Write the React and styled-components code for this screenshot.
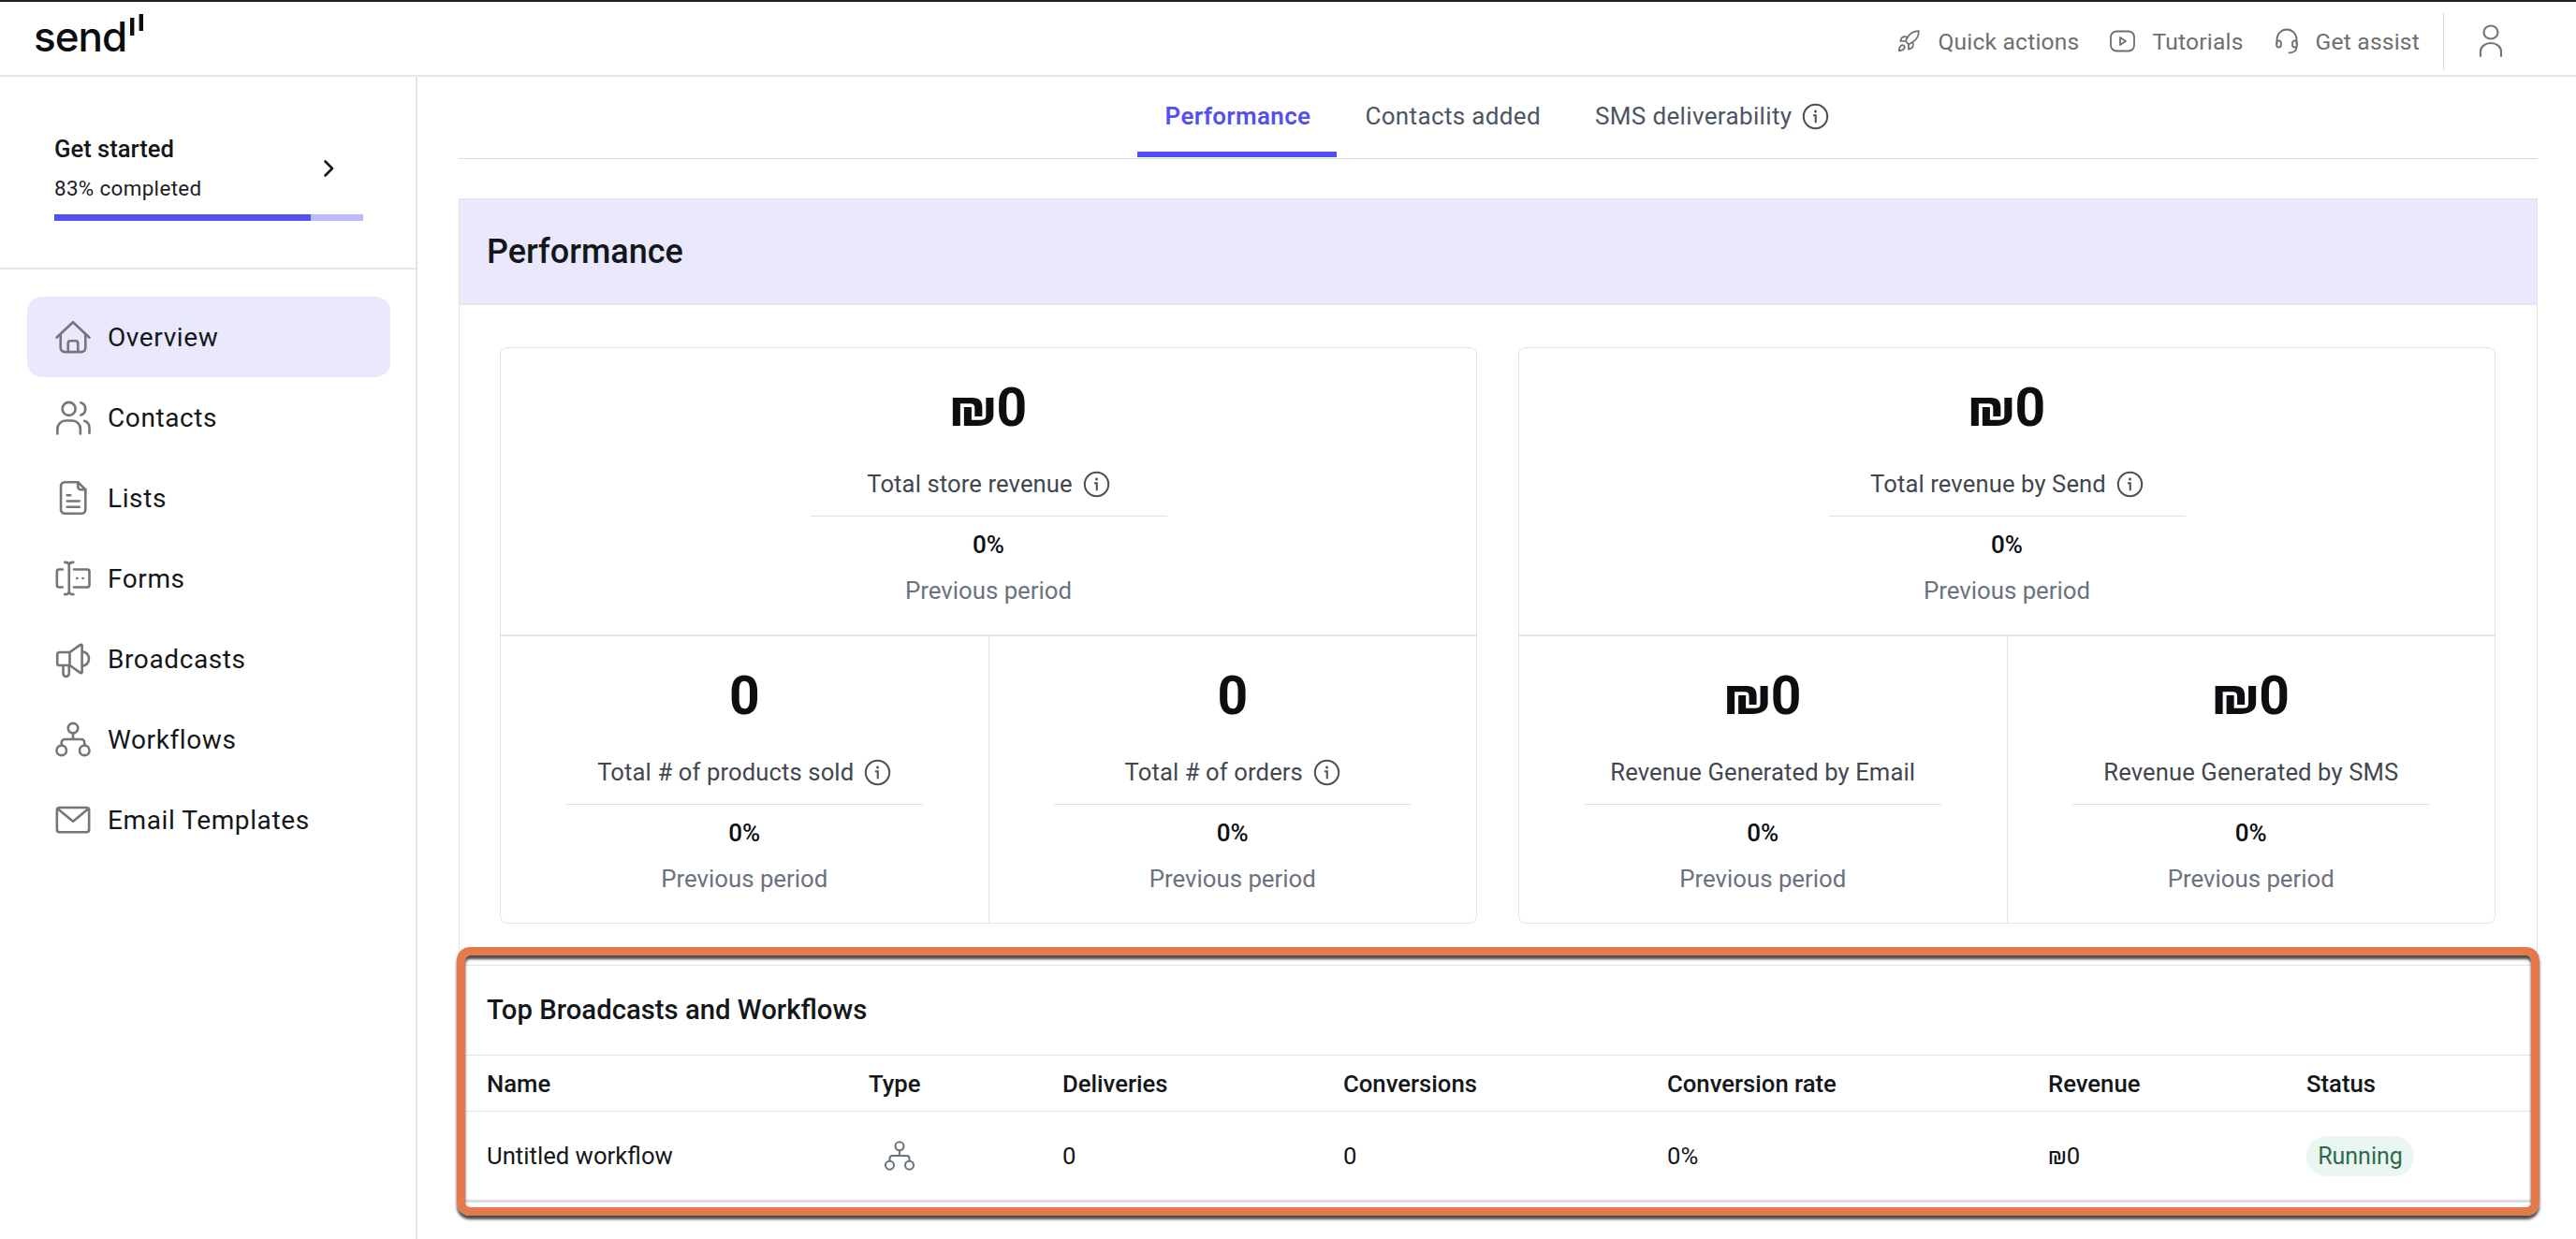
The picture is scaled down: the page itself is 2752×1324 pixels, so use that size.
import React from 'react';
import styled, { createGlobalStyle } from 'styled-components';
import { Rocket } from 'lucide-react';

const GlobalStyle = createGlobalStyle`
  html, body { margin: 0; padding: 0; background: #fff; }
  body { font-family: Roboto, "Liberation Sans", sans-serif; color: #111418; overflow: hidden; }
  * { box-sizing: border-box; }
`;

const Page = styled.div`
  width: 2752px;
  height: 1324px;
  border-top: 2px solid #1f2328;
  display: flex;
  flex-direction: column;
  overflow: hidden;
`;

const Topbar = styled.header`
  height: 80px;
  flex: none;
  border-bottom: 2px solid #e5e5e5;
  display: flex;
  align-items: center;
  justify-content: space-between;
  padding: 0 0 0 38px;
`;

const Logo = styled.div`
  display: flex;
  align-items: flex-start;
  height: 78px;
`;

const LogoWord = styled.span`
  font-family: Inter, sans-serif;
  font-size: 44px;
  font-weight: 500;
  line-height: 50px;
  margin-top: 12px;
  margin-left: -2px;
  letter-spacing: -1px;
  color: #0c0d0f;
`;

const LogoBars = styled.svg`
  width: 16px;
  height: 26px;
  margin-top: 12px;
  margin-left: 4px;
`;

const TopActions = styled.div`
  display: flex;
  align-items: center;
  height: 100%;
  padding-top: 6px;
`;

const TopAction = styled.div`
  display: flex;
  align-items: center;
  gap: 18px;
  margin-right: 33px;
  font-size: 24.6px;
  font-weight: 400;
  letter-spacing: 0.2px;
  color: #6f6f6f;
  svg { flex: none; }
`;

const UserSlot = styled.div`
  width: 142px;
  height: 61px;
  border-left: 1px solid #dcdcdc;
  display: flex;
  align-items: center;
  margin-left: -8px;
  padding-left: 37px;
`;

const Body = styled.div`
  flex: 1;
  display: flex;
  min-height: 0;
`;

const Sidebar = styled.aside`
  width: 446px;
  flex: none;
  border-right: 2px solid #e2e2e2;
`;

const GetStarted = styled.div`
  height: 206px;
  border-bottom: 2px solid #e5e5e5;
  padding: 60px 58px 0;
`;

const GetStartedRow = styled.div`
  display: flex;
  align-items: center;
  justify-content: space-between;
  padding-right: 28px;
`;

const GetStartedTitle = styled.div`
  font-size: 25.6px;
  font-weight: 500;
  line-height: 34px;
  color: #14171a;
`;

const GetStartedSub = styled.div`
  font-size: 22.4px;
  line-height: 32px;
  margin-top: 9px;
  letter-spacing: 0.35px;
  color: #1d2024;
`;

const Progress = styled.div`
  width: 330px;
  height: 7px;
  margin-top: 12px;
  background: #bcb8fa;
`;

const ProgressFill = styled.div`
  height: 100%;
  background: #544ff2;
`;

const Nav = styled.nav`
  padding: 29px 27px 0 29px;
`;

const NavItem = styled.div`
  height: 86px;
  border-radius: 16px;
  display: flex;
  align-items: center;
  gap: 16px;
  padding-left: 28px;
  font-size: 28px;
  letter-spacing: 0.6px;
  color: #14171a;
  background: ${p => (p.$active ? '#e9e8fd' : 'transparent')};
`;

const Main = styled.main`
  flex: 1;
  min-width: 0;
  padding: 0 41px 0 44px;
`;

const Tabs = styled.div`
  height: 88px;
  display: flex;
  justify-content: center;
  border-bottom: 1px solid #d9d9d9;
  padding-right: 4px;
`;

const Tab = styled.div`
  display: flex;
  align-items: center;
  gap: 11px;
  height: 86px;
  padding: 4px 28px 0 30px;
  font-size: 26px;
  font-weight: ${p => (p.$active ? 600 : 400)};
  letter-spacing: 0.35px;
  color: ${p => (p.$active ? '#544ff2' : '#4b5563')};
  border-bottom: 6px solid ${p => (p.$active ? '#544ff2' : 'transparent')};
`;

const Panel = styled.section`
  margin-top: 42px;
  border: 1px solid #e2e2e2;
  border-bottom: none;
`;

const PanelHeader = styled.div`
  height: 113px;
  background: #e9e8fd;
  border-bottom: 1px solid #e2e2e2;
  display: flex;
  align-items: center;
  padding-left: 29px;
  font-size: 36px;
  font-weight: 500;
  color: #14171a;
`;

const CardGrid = styled.div`
  display: grid;
  grid-template-columns: 1044px 1044px;
  gap: 44px;
  padding: 45px 43px 44px;
`;

const Card = styled.div`
  border: 1px solid #e4e4e4;
  border-radius: 8px;
`;

const CardRow = styled.div`
  display: flex;
  border-top: ${p => (p.$split ? '2px solid #e4e4e4' : 'none')};
`;

const Cell = styled.div`
  flex: 1;
  height: 306px;
  display: flex;
  flex-direction: column;
  align-items: center;
  & + & { border-left: 1px solid #e4e4e4; }
`;

const Value = styled.div`
  height: 54px;
  margin-top: 37px;
  line-height: 54px;
  font-size: 57px;
  font-weight: 700;
  color: #0c0e11;
`;

const Label = styled.div`
  height: 40px;
  margin-top: 34px;
  display: flex;
  align-items: center;
  gap: 11px;
  font-size: 25.6px;
  letter-spacing: 0.12px;
  color: #42474f;
`;

const CellRule = styled.div`
  width: 381px;
  height: 1px;
  margin-top: 14px;
  background: #e0e0e0;
`;

const Pct = styled.div`
  height: 30px;
  margin-top: 15px;
  line-height: 30px;
  font-size: 26px;
  font-weight: 500;
  color: #0c0e11;
`;

const Prev = styled.div`
  height: 34px;
  margin-top: 17px;
  line-height: 34px;
  font-size: 25.8px;
  color: #6b7280;
`;

const TopSection = styled.div`
  position: relative;
  border-top: 1px solid #e2e2e2;
  border-bottom: 3px solid #dddddd;
`;

const SectionTitle = styled.div`
  height: 95px;
  display: flex;
  align-items: center;
  padding: 0 0 2px 29px;
  font-size: 29.3px;
  font-weight: 500;
  color: #14171a;
`;

const Row = styled.div`
  display: grid;
  grid-template-columns: 408px 207px 300px 346px 407px 276px 1fr;
  align-items: center;
  height: ${p => p.$h}px;
  padding-left: 29px;
  border-top: 1px solid #e2e2e2;
  font-size: 25.7px;
  font-weight: ${p => (p.$head ? 500 : 400)};
  color: #14171a;
`;

const TypeIcon = styled.div`
  padding-left: 15px;
  display: flex;
  color: #6b7280;
`;

const StatusPill = styled.span`
  display: inline-flex;
  align-items: center;
  justify-content: center;
  width: 115px;
  height: 43px;
  border-radius: 22px;
  background: #e9f6f1;
  color: #2f6b4b;
  font-size: 25px;
`;

// orange annotation drawn on top of the screenshot
const Highlight = styled.div`
  position: absolute;
  top: -20px;
  left: -3px;
  right: -3px;
  bottom: -17px;
  border: 9px solid #e5794a;
  border-radius: 14px;
  box-shadow: 0 4px 3px rgba(30, 30, 30, 0.8), inset 0 4px 3px rgba(30, 30, 30, 0.8);
  pointer-events: none;
`;

const NavIcon = ({ children }) => (
  <svg width="42" height="42" viewBox="0 0 24 24" fill="none" stroke="#76767a" strokeWidth="1.5" strokeLinecap="round" strokeLinejoin="round">
    {children}
  </svg>
);

const InfoIcon = () => (
  <svg width="29" height="29" viewBox="0 0 24 24" fill="none" stroke="#4b5058" strokeWidth="1.7" strokeLinecap="round">
    <circle cx="12" cy="12" r="10.5" />
    <path d="M10.6 11h1.6v6" />
    <path d="M12 7.4v.2" strokeWidth="2.2" />
  </svg>
);

const WorkflowPaths = () => (
  <>
    <circle cx="12" cy="5.2" r="3" />
    <circle cx="5" cy="18.8" r="3" />
    <circle cx="19" cy="18.8" r="3" />
    <path d="M12 8.2V12M5 15.8V14a2 2 0 0 1 2-2h10a2 2 0 0 1 2 2v1.8" />
  </>
);

const navItems = [
  { name: 'Overview', active: true, icon: <><path d="M2 12.4 12 3l10 9.4" /><path d="M4.4 10.4V18.6a2.6 2.6 0 0 0 2.6 2.6h10a2.6 2.6 0 0 0 2.6-2.6v-8.2" /><path d="M9 21v-5.2a1.4 1.4 0 0 1 1.4-1.4h3.2a1.4 1.4 0 0 1 1.4 1.4V21" /></> },
  { name: 'Contacts', icon: <><circle cx="9.5" cy="6.8" r="4" /><path d="M16.8 3a4 4 0 0 1 0 7.6" /><path d="M2.5 22v-3a5 5 0 0 1 5-5h4a5 5 0 0 1 5 5v3" /><path d="M19 14.2a4.4 4.4 0 0 1 3 4.2v3.2" /></> },
  { name: 'Lists', icon: <><path d="M15 2.4H7a2.4 2.4 0 0 0-2.4 2.4v14.4A2.4 2.4 0 0 0 7 21.6h10.2a2.4 2.4 0 0 0 2.4-2.4V7z" /><path d="M15 2.4v2.8a1.8 1.8 0 0 0 1.8 1.8h2.8" /><path d="M8.4 10.4h2M8.4 14h7.4M8.4 17.6h7.4" /></> },
  { name: 'Forms', icon: <><path d="M5.6 6.6H3.4a1.2 1.2 0 0 0-1.2 1.2v8.4a1.2 1.2 0 0 0 1.2 1.2h2.2" /><path d="M12.6 6.6h8.2a1.2 1.2 0 0 1 1.2 1.2v8.4a1.2 1.2 0 0 1-1.2 1.2h-8.2" /><path d="M9.6 4v16M7 2.2c1.4 0 2.6.6 2.6 1.8 0-1.2 1.2-1.8 2.6-1.8M7 21.8c1.4 0 2.6-.6 2.6-1.8 0 1.2 1.2 1.8 2.6 1.8" /><path d="M14.4 12h.1M18 12h.1" /></> },
  { name: 'Broadcasts', icon: <><path d="M10 8l6.6-4.6a.6.6 0 0 1 .9.5v16.2a.6.6 0 0 1-.9.5L10 16H3.6a1.2 1.2 0 0 1-1.2-1.2V9.2A1.2 1.2 0 0 1 3.6 8z" /><path d="M10 8v8" /><path d="M17.5 7.4c2.6.6 4.2 2.4 4.2 4.6s-1.6 4-4.2 4.6" /><path d="M6 16v5a1.8 1.8 0 0 0 3.6 0v-5" /></> },
  { name: 'Workflows', icon: <WorkflowPaths /> },
  { name: 'Email Templates', icon: <><rect x="2.2" y="4.6" width="19.6" height="15" rx="1.6" /><path d="M3 5.6l9 7.4 9-7.4" /></> },
];

const MetricCell = ({ value, label, info }) => (
  <Cell>
    <Value>{value}</Value>
    <Label>{label}{info && <InfoIcon />}</Label>
    <CellRule />
    <Pct>0%</Pct>
    <Prev>Previous period</Prev>
  </Cell>
);

const tableHead = ['Name', 'Type', 'Deliveries', 'Conversions', 'Conversion rate', 'Revenue', 'Status'];

const App = () => (
  <>
    <GlobalStyle />
    <Page>
      <Topbar>
        <Logo>
          <LogoWord>send</LogoWord>
          <LogoBars viewBox="0 0 16 26">
            <rect x="0" y="5" width="4.4" height="19" fill="#0c0d0f" />
            <rect x="9.6" y="1" width="4.4" height="18" fill="#0c0d0f" />
          </LogoBars>
        </Logo>
        <TopActions>
          <TopAction>
            <Rocket size={26} strokeWidth={1.6} color="#6f6f6f" />
            Quick actions
          </TopAction>
          <TopAction>
            <svg width="27" height="24" viewBox="0 0 27 24" fill="none" stroke="#6f6f6f" strokeWidth="1.8" strokeLinejoin="round">
              <rect x="1" y="1.5" width="25" height="21" rx="6" />
              <path d="M11 8v8l6-4z" />
            </svg>
            Tutorials
          </TopAction>
          <TopAction>
            <svg width="26" height="28" viewBox="0 0 26 28" fill="none" stroke="#6f6f6f" strokeWidth="1.8" strokeLinecap="round">
              <path d="M2.5 17v-5a10.5 10.5 0 0 1 21 0v5" />
              <ellipse cx="4.5" cy="17" rx="2.5" ry="3.6" />
              <ellipse cx="21.5" cy="17" rx="2.5" ry="3.6" />
              <path d="M23.5 20c0 4-3 6.4-8 6.4" />
            </svg>
            Get assist
          </TopAction>
          <UserSlot>
            <svg width="26" height="36" viewBox="0 0 26 36" fill="none" stroke="#76767a" strokeWidth="2.2" strokeLinecap="round">
              <ellipse cx="13" cy="8.5" rx="7.5" ry="7" />
              <path d="M2 34v-5a11 9 0 0 1 22 0v5" />
            </svg>
          </UserSlot>
        </TopActions>
      </Topbar>
      <Body>
        <Sidebar>
          <GetStarted>
            <GetStartedRow>
              <div>
                <GetStartedTitle>Get started</GetStartedTitle>
                <GetStartedSub>83% completed</GetStartedSub>
              </div>
              <svg width="14" height="20" viewBox="0 0 14 20" fill="none" stroke="#14171a" strokeWidth="2.6" strokeLinecap="round" strokeLinejoin="round">
                <path d="M3.5 2.5 11 10l-7.5 7.5" />
              </svg>
            </GetStartedRow>
            <Progress>
              <ProgressFill style={{ width: '83%' }} />
            </Progress>
          </GetStarted>
          <Nav>
            {navItems.map(item => (
              <NavItem key={item.name} $active={item.active}>
                <NavIcon>{item.icon}</NavIcon>
                {item.name}
              </NavItem>
            ))}
          </Nav>
        </Sidebar>
        <Main>
          <Tabs>
            <Tab $active>Performance</Tab>
            <Tab>Contacts added</Tab>
            <Tab>SMS deliverability <InfoIcon /></Tab>
          </Tabs>
          <Panel>
            <PanelHeader>Performance</PanelHeader>
            <CardGrid>
              <Card>
                <CardRow>
                  <MetricCell value="₪0" label="Total store revenue" info />
                </CardRow>
                <CardRow $split>
                  <MetricCell value="0" label="Total # of products sold" info />
                  <MetricCell value="0" label="Total # of orders" info />
                </CardRow>
              </Card>
              <Card>
                <CardRow>
                  <MetricCell value="₪0" label="Total revenue by Send" info />
                </CardRow>
                <CardRow $split>
                  <MetricCell value="₪0" label="Revenue Generated by Email" />
                  <MetricCell value="₪0" label="Revenue Generated by SMS" />
                </CardRow>
              </Card>
            </CardGrid>
            <TopSection>
              <SectionTitle>Top Broadcasts and Workflows</SectionTitle>
              <Row $head $h={60}>
                {tableHead.map(h => <div key={h}>{h}</div>)}
              </Row>
              <Row $h={95}>
                <div>Untitled workflow</div>
                <TypeIcon>
                  <svg width="36" height="36" viewBox="0 0 24 24" fill="none" stroke="currentColor" strokeWidth="1.4">
                    <WorkflowPaths />
                  </svg>
                </TypeIcon>
                <div>0</div>
                <div>0</div>
                <div>0%</div>
                <div>₪0</div>
                <div><StatusPill>Running</StatusPill></div>
              </Row>
              <Highlight />
            </TopSection>
          </Panel>
        </Main>
      </Body>
    </Page>
  </>
);

export default App;
